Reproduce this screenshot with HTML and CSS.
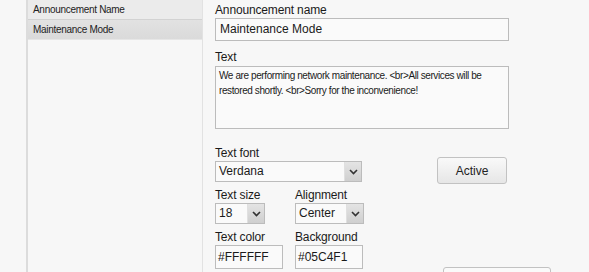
FILE: index.html
```html
<!DOCTYPE html>
<html lang="en">
<head>
    <meta charset="UTF-8">
    <title>Announcements</title>
    <link rel="stylesheet" href="styles.css">
</head>
<body>
    <div class="window">
        <div class="gutter"></div>
        <div class="list">
            <div class="list-row header">Announcement Name</div>
            <div class="list-row selected">Maintenance Mode</div>
        </div>
        <div class="editor">
            <label class="label">Announcement name</label>
            <div class="field name-field">Maintenance Mode</div>

            <label class="label text-label">Text</label>
            <div class="field text-field">We are performing network maintenance. &lt;br&gt;All services will be restored shortly. &lt;br&gt;Sorry for the inconvenience!</div>

            <div class="style-row">
                <div class="style-fields">
                    <label class="label">Text font</label>
                    <div class="select font-select">
                        <span class="select-value">Verdana</span>
                        <span class="select-arrow"><svg width="9" height="6" viewBox="0 0 9 6"><path d="M1 1 L4.5 4.5 L8 1" fill="none" stroke="#333" stroke-width="1.6"/></svg></span>
                    </div>

                    <div class="pair">
                        <div class="cell">
                            <label class="label">Text size</label>
                            <div class="select size-select">
                                <span class="select-value">18</span>
                                <span class="select-arrow"><svg width="9" height="6" viewBox="0 0 9 6"><path d="M1 1 L4.5 4.5 L8 1" fill="none" stroke="#333" stroke-width="1.6"/></svg></span>
                            </div>
                        </div>
                        <div class="cell">
                            <label class="label">Alignment</label>
                            <div class="select align-select">
                                <span class="select-value">Center</span>
                                <span class="select-arrow"><svg width="9" height="6" viewBox="0 0 9 6"><path d="M1 1 L4.5 4.5 L8 1" fill="none" stroke="#333" stroke-width="1.6"/></svg></span>
                            </div>
                        </div>
                    </div>

                    <div class="pair">
                        <div class="cell">
                            <label class="label">Text color</label>
                            <div class="field color-field">#FFFFFF</div>
                        </div>
                        <div class="cell">
                            <label class="label">Background</label>
                            <div class="field color-field">#05C4F1</div>
                        </div>
                    </div>
                </div>
                <div class="style-actions">
                    <button class="btn">Active</button>
                    <div class="btn-stub"></div>
                </div>
            </div>
        </div>
    </div>
</body>
</html>
```

FILE: styles.css
```css
body {
    margin: 0;
    background: #f7f7f7;
    font-family: "Liberation Sans", Arial, sans-serif;
    color: #1a1a1a;
    overflow: hidden;
}
.window {
    display: flex;
    height: 272px;
}
.gutter {
    width: 26px;
    border-right: 2px solid #dcdcdc;
}
.list {
    width: 174px;
    border-right: 1px solid #e2e2e2;
    margin-right: 1px;
}
.list-row {
    height: 19px;
    line-height: 19px;
    padding-left: 5px;
    font-size: 10px;
    letter-spacing: -0.3px;
    color: #222;
}
.list-row.header {
    background: #ebebeb;
    border-bottom: 1px solid #d2d2d2;
}
.list-row.selected {
    background: linear-gradient(#e2e2e2, #dadada);
    border-bottom: 1px solid #e6e6e6;
}
.editor {
    padding: 3px 0 0 11px;
    width: 340px;
}
.label {
    display: block;
    font-size: 12px;
    line-height: 15px;
    letter-spacing: -0.15px;
    color: #1a1a1a;
}
.field {
    background: #fafafa;
    border: 1px solid #bcbcbc;
    box-sizing: border-box;
    font-size: 12px;
    color: #1a1a1a;
}
.name-field {
    width: 294px;
    height: 23px;
    line-height: 21px;
    padding-left: 4px;
}
.text-label {
    margin-top: 9px;
}
.text-field {
    width: 294px;
    height: 63px;
    margin-top: 1px;
    padding: 1px 3px;
    font-size: 10px;
    letter-spacing: -0.4px;
    line-height: 15px;
}
.style-row {
    display: flex;
    margin-top: 17px;
}
.style-fields {
    width: 222px;
}
.select {
    display: flex;
    height: 21px;
    border: 1px solid #bcbcbc;
    box-sizing: border-box;
    background: #fafafa;
    font-size: 12px;
}
.select-value {
    flex: 1;
    line-height: 19px;
    padding-left: 3px;
}
.select-arrow {
    width: 16px;
    display: flex;
    align-items: center;
    justify-content: center;
    background: linear-gradient(#e4e4e4, #cfcfcf);
    border-left: 1px solid #e0e0e0;
}
.font-select {
    width: 147px;
}
.pair {
    display: flex;
    gap: 12px;
    margin-top: 6px;
}
.cell {
    width: 68px;
}
.size-select {
    width: 50px;
}
.align-select {
    width: 69px;
}
.color-field {
    width: 68px;
    height: 24px;
    line-height: 22px;
    padding-left: 2px;
}
.style-actions {
    display: flex;
    flex-direction: column;
    padding-top: 11px;
}
.btn {
    width: 70px;
    height: 27px;
    border: 1px solid #c2c2c2;
    border-radius: 3px;
    background: linear-gradient(#f9f9f9, #e6e6e6);
    font-family: "Liberation Sans", Arial, sans-serif;
    font-size: 12px;
    color: #222;
}
.btn-stub {
    width: 106px;
    height: 10px;
    margin-top: 83px;
    margin-left: 6px;
    border: 1px solid #c2c2c2;
    border-radius: 3px 3px 0 0;
    background: #fafafa;
}
```
